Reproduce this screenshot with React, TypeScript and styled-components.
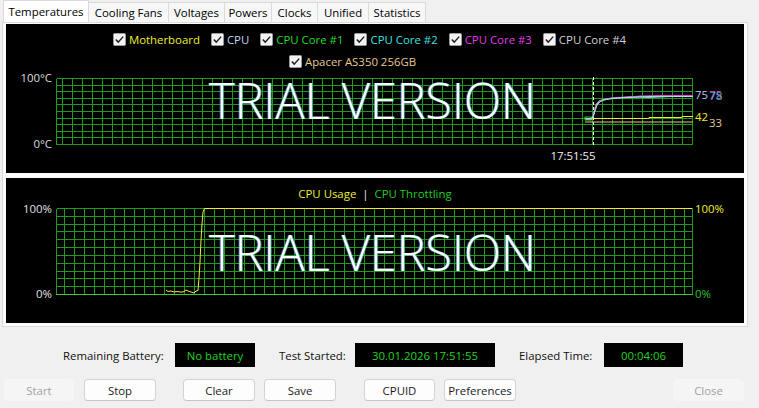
import styled, { createGlobalStyle } from "styled-components";

const GlobalStyle = createGlobalStyle`
  html, body {
    margin: 0;
    background: #f0f0f0;
  }
  body {
    font-family: "Segoe UI", "Open Sans", "Noto Sans", sans-serif;
    font-size: 11.4px;
    color: #000;
  }
`;

const GRID = "#1f9a1f";

const Window = styled.div`
  width: 759px;
  height: 408px;
  overflow: hidden;
  display: flex;
  flex-direction: column;
`;

const TabBar = styled.div`
  display: flex;
  align-items: flex-end;
  height: 22px;
  padding-left: 3px;
`;

const Tab = styled.div<{ $w: number; $active?: boolean }>`
  box-sizing: border-box;
  width: ${(p) => p.$w}px;
  height: ${(p) => (p.$active ? 22 : 20)}px;
  margin-right: -1px;
  border: 1px solid #dadada;
  border-bottom: none;
  background: ${(p) => (p.$active ? "#ffffff" : "#f7f7f7")};
  display: flex;
  align-items: center;
  justify-content: center;
  white-space: nowrap;
  position: relative;
  z-index: ${(p) => (p.$active ? 1 : 0)};
`;

const TabPage = styled.div`
  margin-left: 2px;
  width: 746px;
  box-sizing: border-box;
  border: 1px solid #dadada;
  background: #fcfcfc;
  padding: 1px 3px 3px 3px;
  display: flex;
  flex-direction: column;
  gap: 5px;
`;

const Panel = styled.div<{ $h: number }>`
  position: relative;
  height: ${(p) => p.$h}px;
  background: #000;
  display: flex;
  flex-direction: column;
`;

const Legend = styled.div`
  display: flex;
  flex-direction: column;
  padding-top: 4px;
`;

const LegendRow = styled.div<{ $offset?: number }>`
  height: 22px;
  display: flex;
  align-items: center;
  justify-content: center;
  padding-right: ${(p) => p.$offset ?? 0}px;
`;

const LegendItem = styled.label`
  display: flex;
  align-items: center;
  gap: 3px;
  margin-right: 11px;
`;

const LegendText = styled.span<{ $color: string }>`
  color: ${(p) => p.$color};
  white-space: nowrap;
`;

const Divider = styled.span`
  color: #e8e8e8;
  margin: 0 6px;
`;

const TrialMark = styled.div<{ $top: number }>`
  position: absolute;
  left: 0;
  right: 0;
  top: ${(p) => p.$top}px;
  text-align: center;
  font-family: "Open Sans", sans-serif;
  font-weight: 300;
  font-size: 49px;
  line-height: 1;
  letter-spacing: -0.3px;
  color: #fff;
  text-shadow: 1px 0 0 rgba(70, 200, 170, 0.7), -1px 0 0 rgba(90, 150, 255, 0.5);
  pointer-events: none;
  white-space: nowrap;
  padding-right: 5px;
`;

const ChartSvg = styled.svg`
  display: block;
  flex: none;
  overflow: visible;
  font-family: "Segoe UI", "Open Sans", sans-serif;
  font-size: 11.4px;
`;

const StatusRow = styled.div`
  display: flex;
  align-items: center;
  height: 24px;
  margin-top: 16px;
  padding-left: 63px;
`;

const StatusLabel = styled.span<{ $w: number; $gap: number }>`
  width: ${(p) => p.$w}px;
  margin-right: ${(p) => p.$gap}px;
  white-space: nowrap;
  color: #111;
`;

const StatusBox = styled.div<{ $w: number; $gap: number }>`
  width: ${(p) => p.$w}px;
  margin-right: ${(p) => p.$gap}px;
  height: 24px;
  background: #000;
  color: #22d322;
  display: flex;
  align-items: center;
  justify-content: center;
  white-space: nowrap;
`;

const ButtonRow = styled.div`
  display: flex;
  align-items: center;
  height: 22px;
  margin-top: 12px;
  padding: 0 15px 0 4px;
`;

const Button = styled.button<{ $w: number; $gap?: number; $push?: boolean }>`
  box-sizing: border-box;
  width: ${(p) => p.$w}px;
  height: 22px;
  margin-left: ${(p) => (p.$push ? "auto" : `${p.$gap ?? 0}px`)};
  font: inherit;
  color: #1b1b1b;
  background: #fdfdfd;
  border: 1px solid #d3d3d3;
  border-bottom-color: #c4c4c4;
  border-radius: 4px;
  padding: 0;

  &:disabled {
    color: #a2a2a2;
    background: #f5f5f5;
    border-color: #f5f5f5;
  }
`;

function CheckBox() {
  return (
    <svg width="13" height="13" viewBox="0 0 13 13">
      <rect x="0.5" y="0.5" width="12" height="12" rx="1" fill="#f3f3f3" stroke="#9a9a9a" />
      <path d="M2.8 6.6 L5.2 9.1 L10.2 3.6" fill="none" stroke="#1a1a1a" strokeWidth="1.4" />
    </svg>
  );
}

const tabs = [
  { label: "Temperatures", w: 86, active: true },
  { label: "Cooling Fans", w: 81 },
  { label: "Voltages", w: 57 },
  { label: "Powers", w: 48 },
  { label: "Clocks", w: 47 },
  { label: "Unified", w: 52 },
  { label: "Statistics", w: 58 },
];

const sensors = [
  { label: "Motherboard", color: "#eeee30" },
  { label: "CPU", color: "#c4d6f4" },
  { label: "CPU Core #1", color: "#22dd22" },
  { label: "CPU Core #2", color: "#3ee0e0" },
  { label: "CPU Core #3", color: "#e23ee2" },
  { label: "CPU Core #4", color: "#d2d2d2" },
];

function Grid(props: { x0: number; x1: number; y0: number; y1: number; vFirst: number; rows: number }) {
  const { x0, x1, y0, y1, vFirst, rows } = props;
  const lines = [];
  for (let i = 0; i <= rows; i++) {
    const y = y0 + ((y1 - y0) * i) / rows;
    lines.push(<line key={"h" + i} x1={x0} x2={x1} y1={y} y2={y} />);
  }
  lines.push(<line key="vl" x1={x0} x2={x0} y1={y0} y2={y1} />);
  for (let x = vFirst; x < x1; x += 10) {
    lines.push(<line key={"v" + x} x1={x} x2={x} y1={y0} y2={y1} />);
  }
  lines.push(<line key="vr" x1={x1} x2={x1} y1={y0} y2={y1} />);
  return (
    <g stroke={GRID} strokeWidth="1" shapeRendering="crispEdges">
      {lines}
    </g>
  );
}

function TempChart() {
  return (
    <ChartSvg width="736" height="101">
      <g transform="translate(-6 -72)">
        <Grid x0={56.5} x1={692.5} y0={78.5} y1={144.5} vFirst={62.5} rows={10} />
        <text x="52" y="82" textAnchor="end" fill="#dcdcdc">100°C</text>
        <text x="52" y="148" textAnchor="end" fill="#dcdcdc">0°C</text>
        <line x1="593.5" x2="593.5" y1="77" y2="145" stroke="#fff" strokeDasharray="3 2" />
        <text x="573" y="160" textAnchor="middle" fill="#f0f0f0">17:51:55</text>

        <polyline points="585,122 693,122" fill="none" stroke="#e6c890" />
        <polyline points="585,118.5 649,118.5 649,117.5 682,117.5 682,116.5 693,116.5" fill="none" stroke="#eeee30" />
        <polyline points="585,117 592,117 592,120 585,120 585,117" fill="none" stroke="#22dd22" />
        <polyline
          points="586,119 592,119 594,113 596,105 599,101 604,99.5 612,98 622,97.5 634,96.5 650,96.5 670,96 693,96"
          fill="none"
          stroke="#c4d6f4"
        />
        <polyline
          points="586,119 592,119 594,112 596,104 600,100.5 606,99 616,97.5 628,97 640,96 660,95.5 693,95.5"
          fill="none"
          stroke="#e23ee2"
        />
        <polyline
          points="586,119 592,119 594,114 597,105 601,101 608,99 618,98 630,97.5 640,97 648,97.5 660,97 672,96.5 693,96.5"
          fill="none"
          stroke="#3ee0e0"
        />
        <polyline
          points="586,119 593,118 595,110 598,103 603,100 612,98.5 625,97.5 645,97 665,96.5 693,96.5"
          fill="none"
          stroke="#d8d8d8"
          strokeOpacity="0.8"
        />

        <text x="695" y="99" fill="#b4c8f0">75</text>
        <text x="709" y="99" fill="#e23ee2">75</text>
        <text x="709.5" y="100" fill="#3ee0e0" fillOpacity="0.8">78</text>
        <text x="695" y="121" fill="#eeee30">42</text>
        <text x="709" y="127" fill="#e6c890">33</text>
      </g>
    </ChartSvg>
  );
}

function UsageChart() {
  return (
    <ChartSvg width="736" height="119">
      <g transform="translate(-6 -204)">
        <Grid x0={56.5} x1={692.5} y0={208.5} y1={294.5} vFirst={64.5} rows={11} />
        <line x1="56" x2="693" y1="294.5" y2="294.5" stroke="#3cc83c" />
        <text x="52" y="213" textAnchor="end" fill="#e0e0e0">100%</text>
        <text x="52" y="298" textAnchor="end" fill="#e0e0e0">0%</text>
        <polyline
          points="166,290 168,291.5 171,291 174,292 177,291.5 180,292 183,292 186,290 188,291 191,292 194,293 196,291 198,290.5 199,278 200,262 201,240 202,224 203,212 204.5,208.5 692,208.5"
          fill="none"
          stroke="#eeee30"
        />
        <text x="695" y="213" fill="#eeee30">100%</text>
        <text x="695" y="298" fill="#30c030">0%</text>
      </g>
    </ChartSvg>
  );
}

export default function App() {
  return (
    <Window>
      <GlobalStyle />
      <TabBar>
        {tabs.map((t) => (
          <Tab key={t.label} $w={t.w} $active={t.active}>
            {t.label}
          </Tab>
        ))}
      </TabBar>
      <TabPage>
        <Panel $h={149}>
          <Legend>
            <LegendRow>
              {sensors.map((s) => (
                <LegendItem key={s.label}>
                  <CheckBox />
                  <LegendText $color={s.color}>{s.label}</LegendText>
                </LegendItem>
              ))}
            </LegendRow>
            <LegendRow $offset={34}>
              <LegendItem>
                <CheckBox />
                <LegendText $color="#e6c890">Apacer AS350 256GB</LegendText>
              </LegendItem>
            </LegendRow>
          </Legend>
          <TempChart />
          <TrialMark $top={52}>TRIAL VERSION</TrialMark>
        </Panel>
        <Panel $h={145}>
          <Legend>
            <LegendRow>
              <LegendText $color="#eeee30">CPU Usage</LegendText>
              <Divider>|</Divider>
              <LegendText $color="#22cc22">CPU Throttling</LegendText>
            </LegendRow>
          </Legend>
          <UsageChart />
          <TrialMark $top={50}>TRIAL VERSION</TrialMark>
        </Panel>
      </TabPage>
      <StatusRow>
        <StatusLabel $w={99} $gap={13}>Remaining Battery:</StatusLabel>
        <StatusBox $w={80} $gap={24}>No battery</StatusBox>
        <StatusLabel $w={64} $gap={12}>Test Started:</StatusLabel>
        <StatusBox $w={140} $gap={24}>30.01.2026 17:51:55</StatusBox>
        <StatusLabel $w={71} $gap={14}>Elapsed Time:</StatusLabel>
        <StatusBox $w={79} $gap={0}>00:04:06</StatusBox>
      </StatusRow>
      <ButtonRow>
        <Button $w={70} disabled>Start</Button>
        <Button $w={72} $gap={10}>Stop</Button>
        <Button $w={72} $gap={27}>Clear</Button>
        <Button $w={72} $gap={9}>Save</Button>
        <Button $w={71} $gap={28}>CPUID</Button>
        <Button $w={72} $gap={9}>Preferences</Button>
        <Button $w={71} $push disabled>Close</Button>
      </ButtonRow>
    </Window>
  );
}
